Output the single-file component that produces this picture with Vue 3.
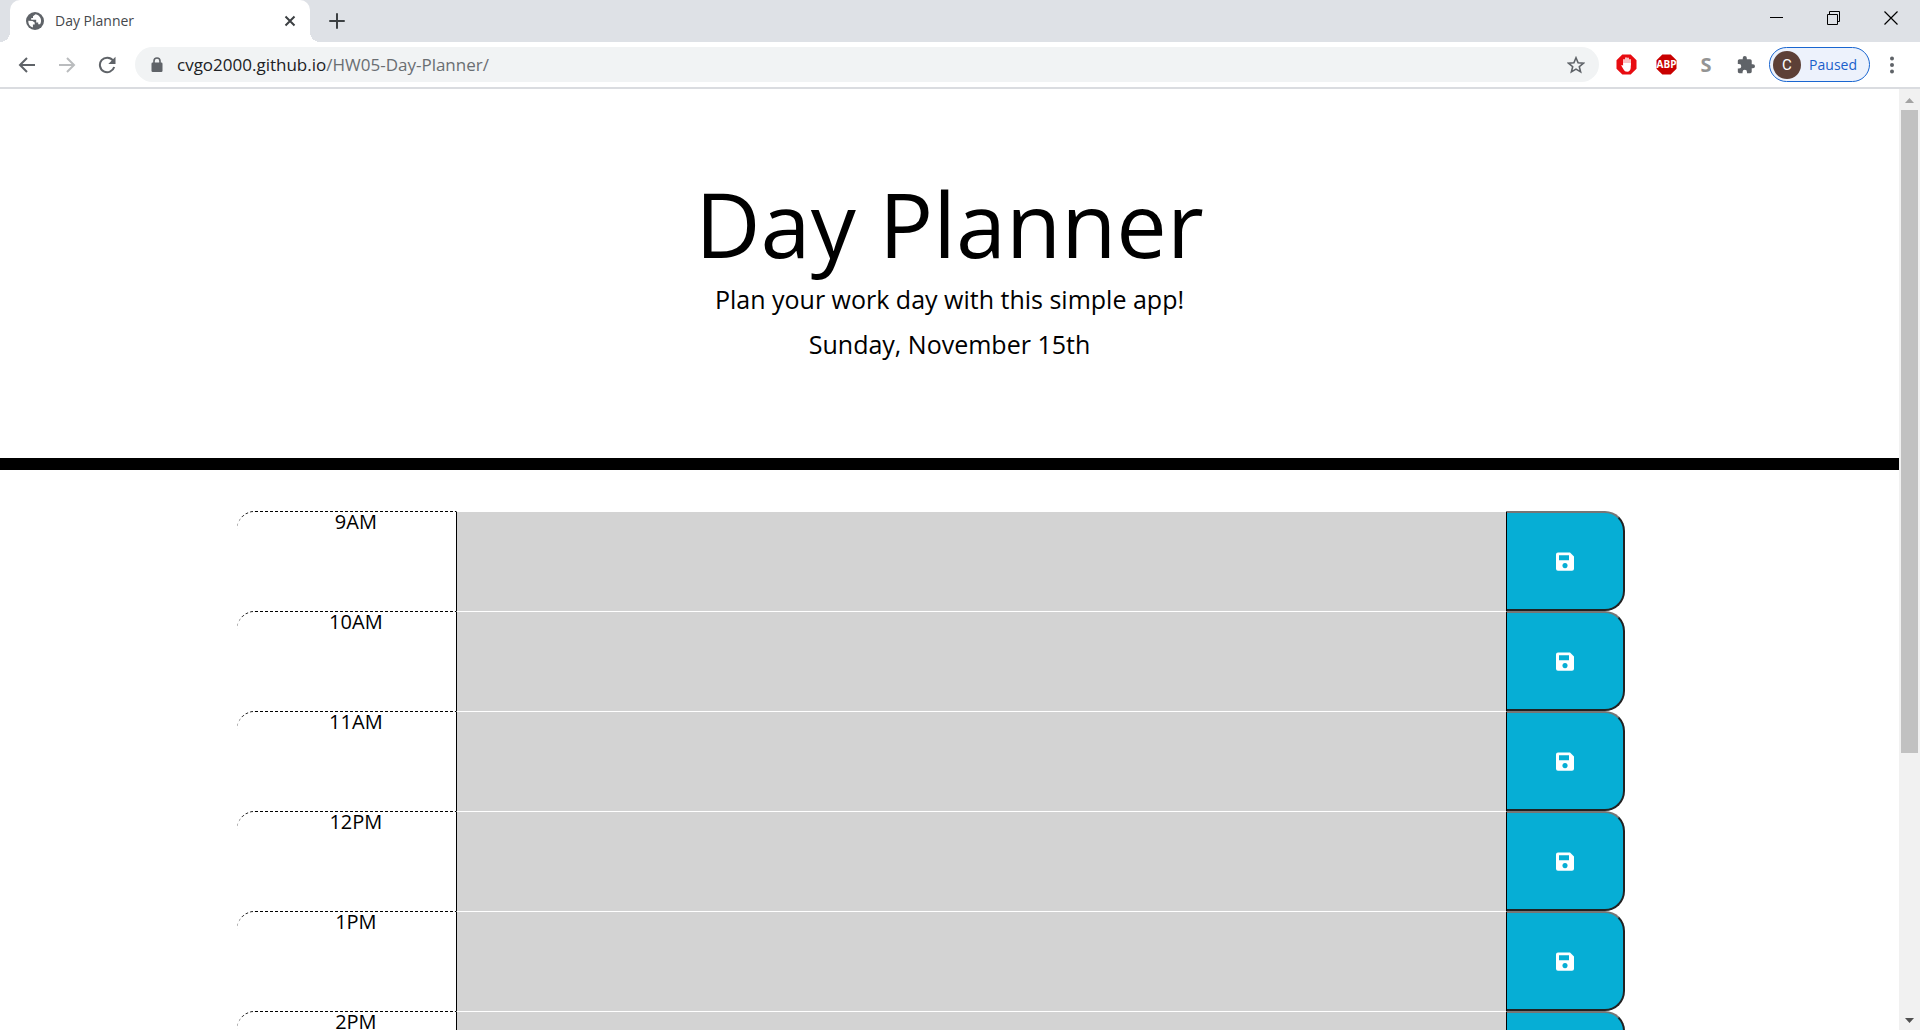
<script setup>
import { ref } from 'vue'

const hours = ['9AM', '10AM', '11AM', '12PM', '1PM', '2PM', '3PM', '4PM', '5PM']
const slots = ref(hours.map((label) => ({ label, text: '' })))
const address = 'cvgo2000.github.io'
const path = '/HW05-Day-Planner/'
</script>

<template>
  <div class="browser">
    <header class="tabstrip">
      <div class="tab">
        <svg class="favicon" viewBox="0 0 18 18" aria-hidden="true">
          <circle cx="9" cy="9" r="9" fill="#5f6368" />
          <path d="M9.600 2.200 7 4.200v1.700H5.200v1.900h5v2.700h2v1.700h1.900a6.700 6.700 0 0 0-4.500-10z" fill="#fff" />
          <path d="M2.300 8.800 6.500 9l2.200 1.500v2H6.900v3A6.700 6.700 0 0 1 2.300 8.800z" fill="#fff" />
        </svg>
        <span class="tab-title">Day Planner</span>
        <button class="tab-close" aria-label="Close tab">
          <svg width="12" height="12" viewBox="0 0 12 12"><path d="M1.500 1.500l9 9m0-9l-9 9" stroke="#3c4043" stroke-width="2" /></svg>
        </button>
      </div>
      <button class="new-tab" aria-label="New tab">
        <svg width="16" height="16" viewBox="0 0 16 16"><path d="M8 1v14M1 8h14" stroke="#3c4043" stroke-width="2" stroke-linecap="round" /></svg>
      </button>
      <div class="window-controls">
        <button aria-label="Minimize"><svg width="14" height="14" viewBox="0 0 14 14"><path d="M0 6.500h13" stroke="#000" /></svg></button>
        <button aria-label="Restore"><svg width="14" height="14" viewBox="0 0 14 14"><path d="M.5 3.500h10v10H.5zM2.500 3.500v-3h10v10h-2" fill="none" stroke="#000" /></svg></button>
        <button aria-label="Close"><svg width="14" height="14" viewBox="0 0 14 14"><path d="M.5.5l13 13m0-13l-13 13" stroke="#000" stroke-width="1.200" /></svg></button>
      </div>
    </header>

    <nav class="toolbar">
      <button class="tool" aria-label="Back">
        <svg width="18" height="18" viewBox="0 0 18 18"><path d="M17 9H2M9 2L2 9l7 7" fill="none" stroke="#5f6368" stroke-width="2" /></svg>
      </button>
      <button class="tool" aria-label="Forward">
        <svg width="18" height="18" viewBox="0 0 18 18"><path d="M1 9h15M9 2l7 7-7 7" fill="none" stroke="#babcbe" stroke-width="2" /></svg>
      </button>
      <button class="tool" aria-label="Reload">
        <svg width="18" height="18" viewBox="0 0 18 18"><path d="M15 4.500A7.300 7.300 0 1 0 16.200 11" fill="none" stroke="#5f6368" stroke-width="2" /><path d="M17.500.8v7.200h-7.200z" fill="#5f6368" /></svg>
      </button>
      <div class="omnibox">
        <svg class="lock" width="12" height="16" viewBox="0 0 12 16"><path d="M3 6V4a3 3 0 0 1 6 0v2" fill="none" stroke="#5f6368" stroke-width="1.600" /><rect x=".5" y="5.500" width="11" height="9.500" rx="1.200" fill="#5f6368" /></svg>
        <a class="url" href="#"><span class="host">{{ address }}</span>{{ path }}</a>
        <button class="star" aria-label="Bookmark this page">
          <svg width="18" height="18" viewBox="0 0 18 18"><path d="M9 1.800l2.100 5 5.300.4-4.100 3.500 1.300 5.200L9 13.100l-4.600 2.800 1.300-5.200-4.100-3.500 5.300-.4z" fill="none" stroke="#5f6368" stroke-width="1.600" /></svg>
        </button>
      </div>
      <div class="extensions">
        <button class="tool" aria-label="AdBlock">
          <svg width="21" height="21" viewBox="0 0 21 21">
            <path d="M6.300.5h8.400l5.800 5.800v8.400l-5.800 5.800H6.300L.5 14.700V6.300z" fill="#e80c11" />
            <path d="M8 11.500V5.800M10 10V4M12 10V4.200M14 11V5.800" stroke="#fff" stroke-width="1.500" stroke-linecap="round" />
            <path d="M7.250 9h7.500v4.500c0 2.500-1.500 4.300-3.500 4.300-1.900 0-2.900-.8-3.800-2.500l-2.200-3.800c.5-1 1.300-.5 2 .4z" fill="#fff" />
          </svg>
        </button>
        <button class="tool" aria-label="Adblock Plus">
          <svg width="21" height="21" viewBox="0 0 21 21">
            <path d="M6.300.5h8.400l5.800 5.800v8.400l-5.800 5.800H6.300L.5 14.700V6.300z" fill="#c90000" />
            <text x="10.500" y="14" text-anchor="middle" class="abp">ABP</text>
          </svg>
        </button>
        <button class="tool letter">S</button>
        <button class="tool" aria-label="Extensions">
          <svg width="18" height="18" viewBox="1 1 22 22"><path d="M20.500 11H19V7c0-1.100-.9-2-2-2h-4V3.500a2.500 2.500 0 0 0-5 0V5H4c-1.100 0-2 .9-2 2v3.800h1.500a2.700 2.700 0 0 1 0 5.400H2V20c0 1.100.9 2 2 2h3.800v-1.500a2.700 2.700 0 0 1 5.400 0V22H17c1.100 0 2-.9 2-2v-4h1.500a2.500 2.500 0 0 0 0-5z" fill="#5f6368" /></svg>
        </button>
      </div>
      <button class="profile"><span class="avatar">C</span><span>Paused</span></button>
      <button class="menu" aria-label="Menu">
        <svg width="4" height="18" viewBox="0 0 4 18" fill="#5f6368"><circle cx="2" cy="2.500" r="2" /><circle cx="2" cy="9" r="2" /><circle cx="2" cy="15.500" r="2" /></svg>
      </button>
    </nav>

    <div class="viewport">
      <div class="page">
        <section class="jumbotron">
          <h1>Day Planner</h1>
          <p>Plan your work day with this simple app!</p>
          <p>Sunday, November 15th</p>
        </section>
        <main class="schedule">
          <div v-for="(slot, i) in slots" :key="slot.label" class="slot">
            <label class="hour" :for="'slot-' + i">{{ slot.label }}</label>
            <textarea :id="'slot-' + i" v-model="slot.text" class="entry"></textarea>
            <button class="save" :aria-label="'Save ' + slot.label">
              <svg width="18" height="19" viewBox="0 0 18 19"><path fill-rule="evenodd" d="M2 .5h12l4 4v12.200a2 2 0 0 1-2 2H2a2 2 0 0 1-2-2V2.500a2 2 0 0 1 2-2zM3 3.200v5h10v-5zM9 11a2.600 2.600 0 1 0 .01 0z" fill="#fff" /></svg>
            </button>
          </div>
        </main>
      </div>
      <div class="scrollbar" aria-hidden="true">
        <svg width="9" height="5" viewBox="0 0 9 5"><path d="M0 5l4.500-5L9 5z" fill="#a3a3a3" /></svg>
        <div class="track"><div class="thumb"></div></div>
        <svg width="9" height="5" viewBox="0 0 9 5"><path d="M0 0l4.500 5L9 0z" fill="#505050" /></svg>
      </div>
    </div>
  </div>
</template>

<style>
body {
  margin: 0;
  background: #fff;
}
</style>

<style scoped>
* {
  box-sizing: border-box;
}
button {
  padding: 0;
  border: 0;
  background: none;
  font-family: inherit;
  display: flex;
  align-items: center;
  justify-content: center;
}
svg {
  display: block;
  flex: none;
}
.browser {
  height: 100vh;
  display: flex;
  flex-direction: column;
  overflow: hidden;
  font-family: "Open Sans", "Noto Sans", sans-serif;
}
.tabstrip {
  flex: none;
  height: 42px;
  padding: 0 1px 0 10px;
  display: flex;
  background: #dee1e6;
}
.tab {
  position: relative;
  width: 300px;
  padding: 0 14px 0 16px;
  display: flex;
  align-items: center;
  background: #fff;
  border-radius: 10px 10px 0 0;
}
.tab::before,
.tab::after {
  content: "";
  position: absolute;
  bottom: 0;
  width: 10px;
  height: 10px;
}
.tab::before {
  right: 100%;
  background: radial-gradient(circle at 0 0, transparent 10px, #fff 10px);
}
.tab::after {
  left: 100%;
  background: radial-gradient(circle at 100% 0, transparent 10px, #fff 10px);
}
.favicon {
  width: 18px;
  height: 18px;
}
.tab-title {
  flex: 1;
  margin-left: 11px;
  font-size: 14px;
  line-height: 20px;
  color: #45484c;
}
.new-tab {
  margin-left: 15px;
  width: 24px;
}
.window-controls {
  margin-left: auto;
  display: flex;
}
.window-controls button {
  width: 57px;
  height: 36px;
}
.toolbar {
  flex: none;
  height: 47px;
  padding: 0 6px 0 7px;
  display: flex;
  align-items: center;
  border-bottom: 2px solid #dadce0;
}
.tool {
  width: 40px;
  height: 35px;
}
.omnibox {
  flex: 1;
  height: 35px;
  margin: 0 7px 0 8px;
  padding: 0 14px 0 16px;
  display: flex;
  align-items: center;
  background: #f1f3f4;
  border-radius: 18px;
}
.url {
  flex: 1;
  margin-left: 14px;
  font-size: 17px;
  line-height: 24px;
  color: #6a6e72;
  text-decoration: none;
}
.host {
  color: #202124;
}
.extensions {
  display: flex;
  margin-right: 3px;
}
.abp {
  font: bold 10px "Open Sans", sans-serif;
  fill: #fff;
}
.letter {
  font-size: 20px;
  font-weight: 700;
  color: #949494;
}
.profile {
  width: 101px;
  height: 35px;
  padding: 0 12px 0 3px;
  justify-content: space-between;
  border: 1px solid #1a66d0;
  border-radius: 18px;
  background: #edf2fc;
  color: #1a5fcb;
  font-size: 14px;
}
.avatar {
  width: 28px;
  height: 28px;
  border-radius: 50%;
  background: #5d4037;
  color: #fff;
  font: 15px/28px Roboto, sans-serif;
}
.menu {
  width: 44px;
  height: 35px;
}
.viewport {
  flex: 1;
  min-height: 0;
  display: flex;
}
.page {
  flex: 1;
  overflow: hidden;
}
.jumbotron {
  padding: 80px 32px 87px;
  border-bottom: 12px solid #000;
  text-align: center;
  color: #000;
}
h1 {
  margin: 0 0 4px;
  font-size: 90px;
  font-weight: 400;
  line-height: 108px;
}
.jumbotron p {
  margin: 0 0 8px;
  font-size: 25px;
  font-weight: 400;
  line-height: 37px;
}
.schedule {
  width: 75%;
  margin: 0 auto;
  padding: 41px 37px 0 0;
}
.slot {
  display: flex;
  height: 100px;
}
.hour {
  width: 219px;
  padding-left: 18px;
  border-top: 1px dashed #000;
  border-top-left-radius: 18px;
  font-size: 20px;
  line-height: 20px;
  text-align: center;
}
.entry {
  flex: 1;
  border: solid #000;
  border-width: 0 1px;
  border-top: 1px solid #fff;
  outline: 0;
  resize: none;
  background: #d3d3d3;
  font: 20px "Open Sans", sans-serif;
}
.save {
  width: 118px;
  border: 2px solid;
  border-left: 0;
  border-color: #767676 #212121 #212121 #767676;
  border-radius: 0 20px 20px 0;
  background: #06aed5;
}
.scrollbar {
  width: 21px;
  padding: 9px 0 7px;
  display: flex;
  flex-direction: column;
  align-items: center;
  background: #f1f1f1;
}
.track {
  flex: 1;
  width: 17px;
  margin: 7px 0;
}
.thumb {
  height: 71.4%;
  background: #c1c1c1;
}
</style>
